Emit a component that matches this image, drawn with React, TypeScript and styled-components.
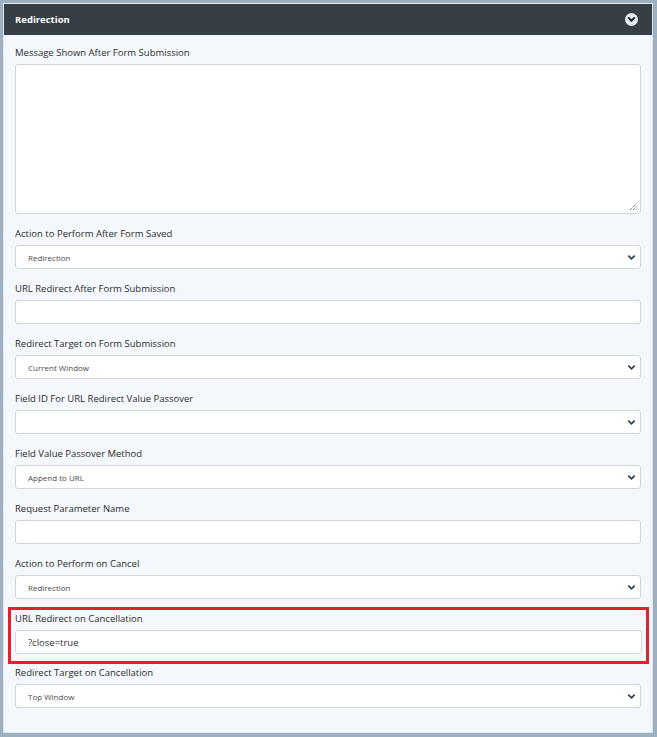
import React from "react";
import styled, { createGlobalStyle } from "styled-components";

const Global = createGlobalStyle`
  html, body { margin: 0; padding: 0; }
  body {
    background: #9eafc0;
    font-family: "Open Sans", "Noto Sans", sans-serif;
  }
  * { box-sizing: border-box; }
`;

const Page = styled.div`
  padding: 3px 4px 4px 3px;
  height: 737px;
`;

const Panel = styled.section`
  background: #f4f8fc;
  border: 1px solid #dfe6ee;
  height: 100%;
  display: flex;
  flex-direction: column;
`;

const Header = styled.header`
  height: 31px;
  background: #363e46;
  display: flex;
  align-items: center;
  justify-content: space-between;
  padding: 0 14px 0 11px;
`;

const Title = styled.h2`
  margin: 0;
  color: #ffffff;
  font-size: 9.5px;
  font-weight: 700;
`;

const Toggle = styled.span`
  width: 13px;
  height: 13px;
  border-radius: 50%;
  background: #e4eaf0;
  display: flex;
  align-items: center;
  justify-content: center;
`;

const Body = styled.div`
  padding: 12px 11px 0 10px;
  display: flex;
  flex-direction: column;
`;

const Group = styled.div<{ $highlight?: boolean }>`
  display: flex;
  flex-direction: column;
  gap: 5px;
  padding: ${(p) => (p.$highlight ? "3px 4px 7px 3px" : "0")};
  margin: ${(p) => (p.$highlight ? "-6px -8px 3px -6px" : "0 0 14px 0")};
  border: ${(p) => (p.$highlight ? "3px solid #e3202c" : "none")};
`;

const Label = styled.label`
  font-size: 9.5px;
  color: #2b2b2b;
  line-height: 12px;
  padding-left: 1px;
`;

const TextArea = styled.div`
  height: 150px;
  margin-left: 1px;
  background: #fff;
  border: 1px solid #cfd5db;
  border-radius: 3px;
  position: relative;
`;

const Grip = styled.svg`
  position: absolute;
  right: 2px;
  bottom: 2px;
`;

const Input = styled.div`
  height: 24px;
  margin-left: 1px;
  background: #fff;
  border: 1px solid #cfd5db;
  border-radius: 3px;
  display: flex;
  align-items: center;
  padding-left: 12px;
  font-size: 9.5px;
  color: #2e2e2e;
`;

const Select = styled.div`
  height: 24px;
  margin-left: 1px;
  background: #fff;
  border: 1px solid #cfd5db;
  border-radius: 3px;
  display: flex;
  align-items: center;
  justify-content: space-between;
  padding: 0 4px 0 12px;
  font-size: 8px;
  color: #4b4b4b;
`;

const Chevron = () => (
  <svg width="9" height="7" viewBox="0 0 9 7">
    <path d="M1.3 1.6 L4.5 4.8 L7.7 1.6" fill="none" stroke="#2f3d4d" strokeWidth="1.7" />
  </svg>
);

type Field =
  | { kind: "select"; label: string; value: string }
  | { kind: "input"; label: string; value: string; highlight?: boolean };

const fields: Field[] = [
  { kind: "select", label: "Action to Perform After Form Saved", value: "Redirection" },
  { kind: "input", label: "URL Redirect After Form Submission", value: "" },
  { kind: "select", label: "Redirect Target on Form Submission", value: "Current Window" },
  { kind: "select", label: "Field ID For URL Redirect Value Passover", value: "" },
  { kind: "select", label: "Field Value Passover Method", value: "Append to URL" },
  { kind: "input", label: "Request Parameter Name", value: "" },
  { kind: "select", label: "Action to Perform on Cancel", value: "Redirection" },
  { kind: "input", label: "URL Redirect on Cancellation", value: "?close=true", highlight: true },
  { kind: "select", label: "Redirect Target on Cancellation", value: "Top Window" },
];

export default function App() {
  return (
    <>
      <Global />
      <Page>
        <Panel>
          <Header>
            <Title>Redirection</Title>
            <Toggle>
              <svg width="9" height="7" viewBox="0 0 9 7">
                <path d="M1.2 1.4 L4.5 4.8 L7.8 1.4" fill="none" stroke="#1f2830" strokeWidth="2" />
              </svg>
            </Toggle>
          </Header>
          <Body>
            <Group>
              <Label>Message Shown After Form Submission</Label>
              <TextArea>
                <Grip width="9" height="9" viewBox="0 0 9 9">
                  <path d="M1 8 L8 1 M4 8 L8 4 M7 8 L8 7" stroke="#555" strokeWidth="1" strokeDasharray="1 1" />
                </Grip>
              </TextArea>
            </Group>
            {fields.map((f) => (
              <Group key={f.label} $highlight={f.kind === "input" && f.highlight}>
                <Label>{f.label}</Label>
                {f.kind === "select" ? (
                  <Select>
                    <span>{f.value}</span>
                    <Chevron />
                  </Select>
                ) : (
                  <Input>{f.value}</Input>
                )}
              </Group>
            ))}
          </Body>
        </Panel>
      </Page>
    </>
  );
}
